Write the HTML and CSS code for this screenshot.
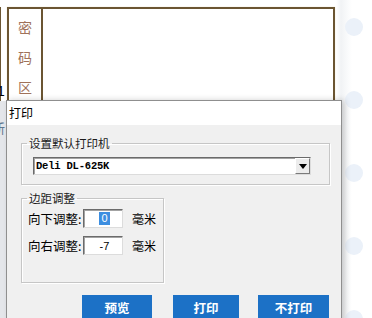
FILE: index.html
```html
<!DOCTYPE html>
<html lang="zh-CN">
<head>
    <meta charset="UTF-8">
    <meta name="viewport" content="width=device-width, initial-scale=1.0">
    <title>打印</title>
    <link rel="stylesheet" href="styles.css">
</head>
<body>
    <div class="page">
        <div class="edge"><span class="edge-num">1</span></div>
        <div class="sheet">
            <div class="sheet-label">
                <span>密</span>
                <span>码</span>
                <span>区</span>
            </div>
            <div class="sheet-body"></div>
        </div>

        <div class="dots">
            <span></span><span></span><span></span><span></span><span></span>
        </div>

        <div class="behind"><span>新</span></div>

        <div class="dialog">
            <div class="dialog-title">打印</div>
            <div class="dialog-body">
                <fieldset class="group group-printer">
                    <legend>设置默认打印机</legend>
                    <div class="select">
                        <span class="select-text">Deli DL-625K</span>
                        <span class="select-btn">
                            <svg width="8" height="5" viewBox="0 0 8 5"><path d="M0 0h8L4 5z" fill="#000"/></svg>
                        </span>
                    </div>
                </fieldset>

                <fieldset class="group group-margin">
                    <legend>边距调整</legend>
                    <div class="field-row">
                        <span class="field-label">向下调整:</span>
                        <div class="num"><span class="num-sel">0</span></div>
                        <span class="unit">毫米</span>
                    </div>
                    <div class="field-row">
                        <span class="field-label">向右调整:</span>
                        <div class="num"><span>-7</span></div>
                        <span class="unit">毫米</span>
                    </div>
                </fieldset>

                <div class="actions">
                    <button class="btn btn-preview">预览</button>
                    <button class="btn btn-print">打印</button>
                    <button class="btn btn-cancel">不打印</button>
                </div>
            </div>
        </div>
    </div>
</body>
</html>
```

FILE: styles.css
```css
body {
    margin: 0;
    background: #fff;
    font-family: "Noto Sans CJK SC", "Noto Sans", sans-serif;
    font-size: 12px;
    color: #000;
}
.page {
    position: relative;
    width: 372px;
    height: 318px;
    overflow: hidden;
    background: linear-gradient(to right, #fff 336px, #f1f3f5 341px, #fafbfc 348px, #fff 352px);
}
.edge {
    position: absolute;
    left: 0;
    top: 7px;
    width: 2px;
    height: 94px;
    border-left: 1px solid #6b5532;
}
.edge-num {
    position: absolute;
    left: -4px;
    top: 76px;
    font-family: "Liberation Sans", sans-serif;
    font-size: 14px;
}
.sheet {
    display: grid;
    grid-template-columns: 34px 1fr;
    margin: 7px 0 0 7px;
    width: 324px;
    height: 400px;
    border: 2px solid #6b5532;
    box-shadow: 0 0 1px #e8d9b5;
}
.sheet-label {
    display: flex;
    flex-direction: column;
    align-items: center;
    padding-top: 3px;
    border-right: 2px solid #6b5532;
    color: #a0725a;
    font-size: 14px;
    line-height: 30px;
}
.dots {
    position: absolute;
    left: 345px;
    top: 18px;
    display: flex;
    flex-direction: column;
    gap: 55px;
}
.dots span {
    width: 18px;
    height: 18px;
    border-radius: 50%;
    background: #ebf1f9;
}
.behind {
    position: absolute;
    left: 0;
    top: 101px;
    width: 6px;
    height: 217px;
    background: #e4e6ea;
    overflow: hidden;
}
.behind span {
    display: block;
    margin: 17px 0 0 -8px;
    color: #5f7890;
    font-size: 13px;
}
.dialog {
    position: absolute;
    left: 6px;
    top: 100px;
    width: 334px;
    height: 240px;
    border: 1px solid #8f8f8f;
    background: #f0f0f0;
    box-shadow: 3px 0 6px rgba(0, 0, 0, 0.18);
}
.dialog-title {
    height: 24px;
    line-height: 24px;
    padding-left: 2px;
    background: #fff;
    font-size: 12px;
}
.dialog-body {
    padding: 11px 0 0 14px;
}
.group {
    box-sizing: border-box;
    margin: 0;
    padding: 7px 0 0 5px;
    border: 1px solid #c6c6c6;
    box-shadow: inset 1px 1px #fff, 1px 1px #fff;
}
.group legend {
    padding: 0 2px;
    font-size: 11.5px;
    line-height: 14px;
    color: #1a1a1a;
}
.group-printer {
    width: 309px;
    height: 49px;
}
.select {
    box-sizing: border-box;
    display: flex;
    align-items: center;
    justify-content: space-between;
    width: 278px;
    height: 18px;
    margin-left: 6px;
    background: #fff;
    border: 1px solid;
    border-color: #6b6b6b #dcdcdc #dcdcdc #6b6b6b;
    box-shadow: inset 1px 1px #a3a3a3;
}
.select-text {
    padding-left: 2px;
    font-family: "Liberation Mono", monospace;
    font-size: 10.5px;
    font-weight: bold;
    letter-spacing: -0.2px;
}
.select-btn {
    box-sizing: border-box;
    display: flex;
    align-items: center;
    justify-content: center;
    width: 15px;
    height: 16px;
    background: #ececec;
    border: 1px solid;
    border-color: #fff #7a7a7a #7a7a7a #fff;
}
.group-margin {
    width: 143px;
    height: 92px;
    margin-top: 6px;
    padding-top: 4px;
}
.field-row {
    display: flex;
    align-items: center;
    height: 19px;
    margin-bottom: 8px;
}
.field-label {
    width: 55px;
    padding-left: 1px;
    font-size: 12.5px;
}
.num {
    box-sizing: border-box;
    display: flex;
    align-items: center;
    justify-content: center;
    width: 40px;
    height: 19px;
    padding-left: 3px;
    background: #fff;
    border: 1px solid;
    border-color: #6b6b6b #dcdcdc #dcdcdc #6b6b6b;
    box-shadow: inset 1px 1px #a3a3a3;
    font-family: "Liberation Sans", sans-serif;
    font-size: 11px;
}
.num-sel {
    padding: 0 2px;
    background: #3d8ee0;
    color: #fff;
    line-height: 13px;
}
.unit {
    margin-left: 9px;
    font-size: 12px;
}
.actions {
    display: flex;
    margin-top: 12px;
    padding-left: 61px;
}
.btn {
    height: 26px;
    padding: 0 0 2px;
    border: none;
    background: #1c71c6;
    color: #fff;
    font-family: "Noto Sans CJK SC", sans-serif;
    font-size: 12.5px;
    font-weight: bold;
}
.btn-preview {
    width: 70px;
}
.btn-print {
    width: 66px;
    margin-left: 21px;
}
.btn-cancel {
    width: 71px;
    margin-left: 19px;
}
```
